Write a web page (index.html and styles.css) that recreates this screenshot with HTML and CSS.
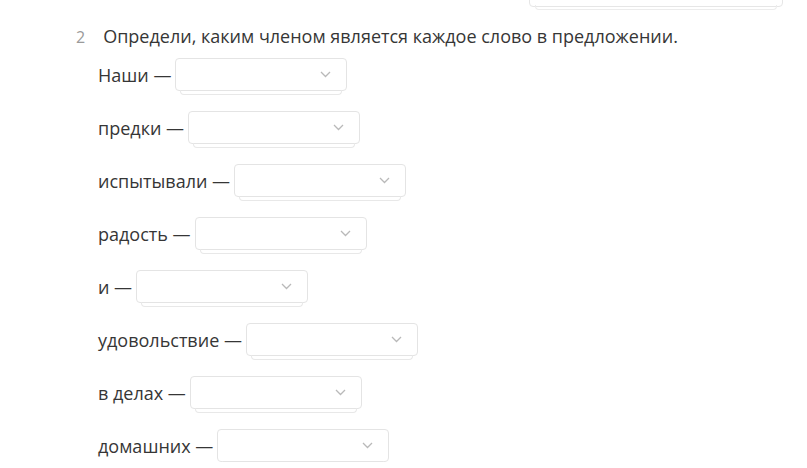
FILE: index.html
```html
<!DOCTYPE html>
<html lang="ru">
<head>
  <meta charset="UTF-8" />
  <meta name="viewport" content="width=device-width, initial-scale=1.0"/>
  <title>Задание 2</title>
  <link rel="stylesheet" href="styles.css">
</head>
<body>
  <div class="top">
    <div class="top-card"></div>
  </div>

  <div class="task">
    <div class="task-head">
      <span class="task-num">2</span>
      <span class="task-text">Определи, каким членом является каждое слово в предложении.</span>
    </div>

    <div class="rows">
      <div class="row"><span class="word">Наши —</span><div class="select"><svg class="chev" width="11" height="7" viewBox="0 0 11 7"><path d="M1 1l4.5 4.5L10 1" fill="none" stroke="#b9b9b9" stroke-width="1.3"/></svg></div></div>
      <div class="row"><span class="word">предки —</span><div class="select"><svg class="chev" width="11" height="7" viewBox="0 0 11 7"><path d="M1 1l4.5 4.5L10 1" fill="none" stroke="#b9b9b9" stroke-width="1.3"/></svg></div></div>
      <div class="row"><span class="word">испытывали —</span><div class="select"><svg class="chev" width="11" height="7" viewBox="0 0 11 7"><path d="M1 1l4.5 4.5L10 1" fill="none" stroke="#b9b9b9" stroke-width="1.3"/></svg></div></div>
      <div class="row"><span class="word">радость —</span><div class="select"><svg class="chev" width="11" height="7" viewBox="0 0 11 7"><path d="M1 1l4.5 4.5L10 1" fill="none" stroke="#b9b9b9" stroke-width="1.3"/></svg></div></div>
      <div class="row"><span class="word">и —</span><div class="select"><svg class="chev" width="11" height="7" viewBox="0 0 11 7"><path d="M1 1l4.5 4.5L10 1" fill="none" stroke="#b9b9b9" stroke-width="1.3"/></svg></div></div>
      <div class="row"><span class="word">удовольствие —</span><div class="select"><svg class="chev" width="11" height="7" viewBox="0 0 11 7"><path d="M1 1l4.5 4.5L10 1" fill="none" stroke="#b9b9b9" stroke-width="1.3"/></svg></div></div>
      <div class="row"><span class="word">в делах —</span><div class="select"><svg class="chev" width="11" height="7" viewBox="0 0 11 7"><path d="M1 1l4.5 4.5L10 1" fill="none" stroke="#b9b9b9" stroke-width="1.3"/></svg></div></div>
      <div class="row"><span class="word">домашних —</span><div class="select"><svg class="chev" width="11" height="7" viewBox="0 0 11 7"><path d="M1 1l4.5 4.5L10 1" fill="none" stroke="#b9b9b9" stroke-width="1.3"/></svg></div></div>
    </div>
  </div>
</body>
</html>
```

FILE: styles.css
```css
body {
  margin: 0;
  font-family: 'Open Sans', 'Noto Sans', sans-serif;
  color: #363636;
  background: #fff;
  overflow: hidden;
}
.top {
  display: flex;
  justify-content: flex-end;
  padding-right: 24px;
  height: 8px;
}
.top-card {
  position: relative;
  width: 252px;
  height: 40px;
  margin-top: -35px;
  border: 1px solid #e6e6e6;
  border-radius: 4px;
  background: #fff;
}
.top-card::after {
  content: '';
  position: absolute;
  left: 5px;
  right: 5px;
  bottom: -4px;
  height: 4px;
  border: 1px solid #ececec;
  border-top: none;
  border-radius: 0 0 4px 4px;
}
.task {
  padding-left: 76px;
  padding-top: 16px;
}
.task-head {
  display: flex;
  align-items: baseline;
  gap: 18px;
  font-size: 18px;
  line-height: 25px;
}
.task-num {
  color: #9a9a9a;
  font-size: 16px;
}
.rows {
  display: flex;
  flex-direction: column;
  gap: 20px;
  padding-left: 22px;
  margin-top: 8px;
}
.row {
  display: flex;
  align-items: center;
  gap: 4px;
  font-size: 18px;
  height: 33px;
}
.select {
  position: relative;
  box-sizing: border-box;
  width: 172px;
  height: 33px;
  border: 1px solid #e4e4e4;
  border-radius: 4px;
  background: #fff;
  display: flex;
  align-items: center;
  justify-content: flex-end;
  padding-right: 15px;
}
.select::after {
  content: '';
  position: absolute;
  left: 4px;
  right: 4px;
  bottom: -5px;
  height: 4px;
  border: 1px solid #e8e8e8;
  border-top: none;
  border-radius: 0 0 4px 4px;
}
```
